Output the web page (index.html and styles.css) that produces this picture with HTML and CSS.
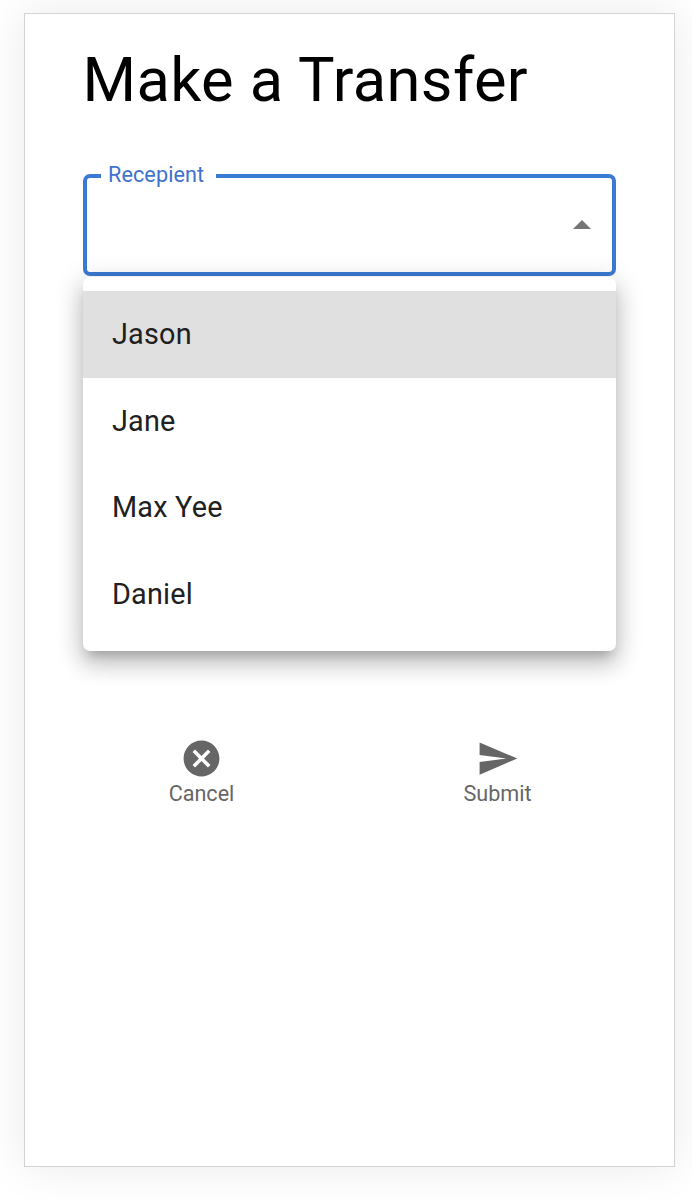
FILE: index.html
```html
<!DOCTYPE html>
<html lang="en">
<head>
<meta charset="utf-8">
<title>Make a Transfer</title>
<link rel="stylesheet" href="styles.css">
</head>
<body>
<main class="screen">
  <h1 class="title">Make a Transfer</h1>
  <fieldset class="field">
    <legend class="label">Recepient</legend>
    <svg class="arrow" viewBox="0 0 18 9"><path d="M0 9L9 0l9 9z"/></svg>
  </fieldset>
  <ul class="menu">
    <li class="option selected">Jason</li>
    <li class="option">Jane</li>
    <li class="option">Max Yee</li>
    <li class="option">Daniel</li>
  </ul>
  <nav class="actions">
    <button class="action">
      <svg class="icon" viewBox="0 0 24 24"><path d="M12 2C6.47 2 2 6.47 2 12s4.47 10 10 10 10-4.47 10-10S17.53 2 12 2zm5 13.59L15.59 17 12 13.41 8.41 17 7 15.59 10.59 12 7 8.41 8.41 7 12 10.59 15.59 7 17 8.41 13.41 12 17 15.59z"/></svg>
      <span>Cancel</span>
    </button>
    <button class="action">
      <svg class="icon" viewBox="0 0 24 24"><path d="M2.01 21L23 12 2.01 3 2 10l15 2-15 2z"/></svg>
      <span>Submit</span>
    </button>
  </nav>
</main>
</body>
</html>
```
FILE: styles.css
```css
* { box-sizing: border-box; }
body {
  margin: 0;
  height: 1200px;
  padding: 13px 17px 0 24px;
  background: #fff;
  font-family: Roboto, sans-serif;
  overflow: hidden;
}
.screen {
  width: 651px;
  height: 1154px;
  padding: 0 58px;
  border: 1px solid #d3d3d3;
  background: #fff;
  box-shadow: 0 0 42px rgba(0, 0, 0, .085);
}
.title {
  margin: 0 0 0 -.6px;
  padding-top: 31px;
  height: 150px;
  font-size: 61.4px;
  line-height: 70px;
  font-weight: 400;
  letter-spacing: .4px;
  white-space: nowrap;
}
.field {
  display: flex;
  align-items: flex-start;
  justify-content: flex-end;
  width: 533px;
  height: 112px;
  margin: 0;
  padding: 32px 21px 0 14px;
  border: 4px solid #3b7ad4;
  border-radius: 7px;
}
.label {
  height: 24px;
  padding: 0 12px 0 7px;
  color: #3f72cf;
  font-size: 21.6px;
  line-height: 22px;
  letter-spacing: .1px;
}
.arrow { width: 18px; height: 9px; fill: #757575; }
.menu {
  position: relative;
  width: 533px;
  height: 374px;
  margin: 1px 0 0;
  padding: 14px 0;
  list-style: none;
  background: #fff;
  border-radius: 7px;
  box-shadow: 0 9px 11px -5px rgba(0,0,0,.2), 0 14px 22px 2px rgba(0,0,0,.14), 0 5px 27px 4px rgba(0,0,0,.12);
}
.option {
  height: 86.5px;
  padding-left: 29px;
  color: #202020;
  font-size: 28.8px;
  line-height: 86px;
  letter-spacing: .22px;
}
.selected { background: #e0e0e0; }
.actions {
  display: flex;
  justify-content: space-between;
  width: 533px;
  padding-top: 86px;
}
.action {
  display: flex;
  flex-direction: column;
  align-items: center;
  width: 237px;
  padding: 0;
  border: 0;
  background: none;
  color: #666;
  font: 21.6px/28px Roboto, sans-serif;
}
.icon { width: 43px; height: 43px; fill: #666; }
```
